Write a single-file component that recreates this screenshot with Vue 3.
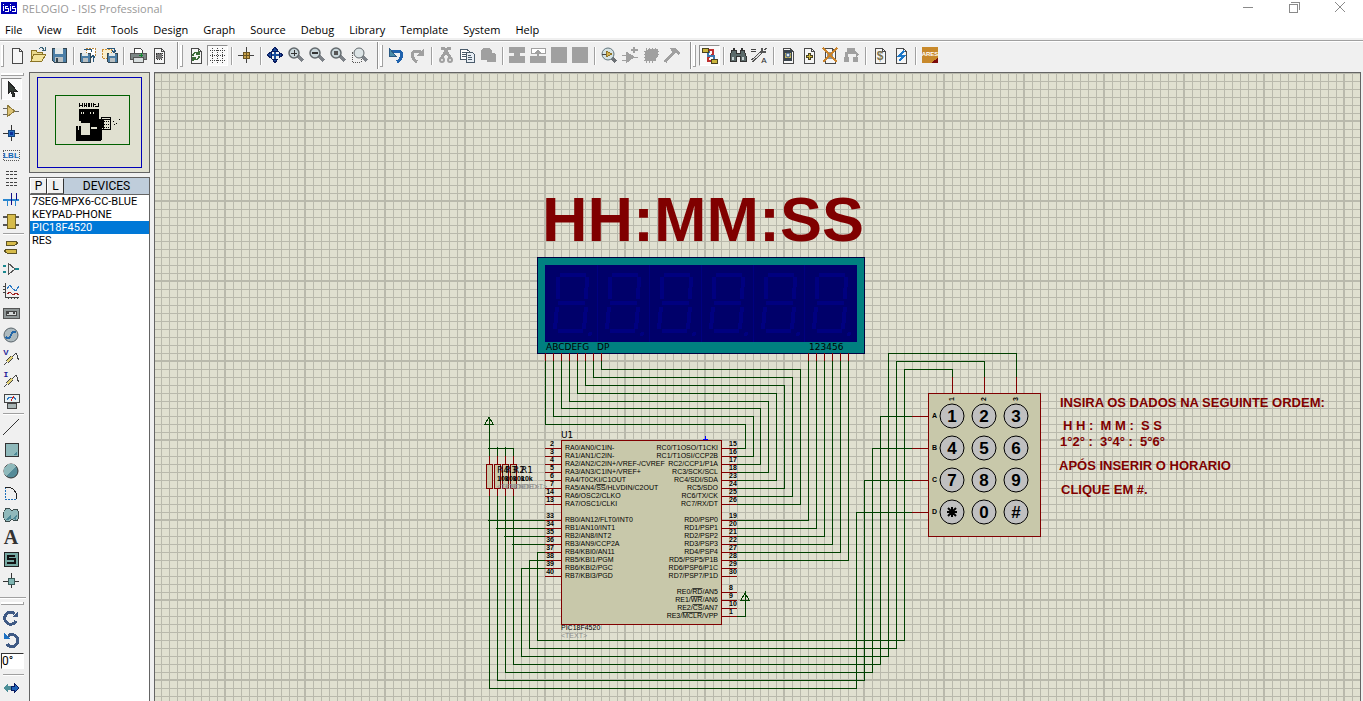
<script setup>
import { ref } from 'vue'

const menus = ['File', 'View', 'Edit', 'Tools', 'Design', 'Graph', 'Source', 'Debug', 'Library', 'Template', 'System', 'Help']

const page = '<path d="M3 1h7l3 3v12H3z" fill="#f6f6f6" stroke="#4a4a4a"/><path d="M10 1v3h3" fill="none" stroke="#4a4a4a"/>'
const lens = '<path d="M10 9l5 5" stroke="#7d8288" stroke-width="3"/><circle cx="6" cy="6" r="5" fill="#c9d6da" stroke="#62696d" stroke-width="1.5"/>'
const disk = '<path d="M1 1h14v14H3l-2-2z" fill="#4b7ea6" stroke="#33454f"/><path d="M4 1h8v6H4z" fill="#e2e8e8"/><path d="M4 10h8v5H4z" fill="#b8bfc2"/><path d="M5 11h2v4H5z" fill="#33454f"/>'
const smallDisk = '<path d="M0 6h10v9H1l-1-1z" fill="#4b7ea6" stroke="#33454f"/><path d="M2 6h6v3H2z" fill="#e2e8e8"/><path d="M3 11h5v4H3z" fill="#b8bfc2"/>'
const probe = '<path d="M1 16l3-3" stroke="#444"/><path d="M4 13l5-5" stroke="#444" stroke-width="4"/><path d="M4 13l5-5" stroke="#e0cf73" stroke-width="2"/><path d="M9 8l2-2c1-2 3-2 3 0v2l2 3" fill="none" stroke="#444"/>'
const glyph = (t, x, y, size, fill, family = 'Liberation Sans', weight = 400) =>
  `<text x="${x}" y="${y}" text-anchor="middle" font-family="${family}" font-size="${size}" font-weight="${weight}" fill="${fill}">${t}</text>`

const icons = {
  new: page,
  open: '<path d="M1 14V3h5l1 2h5v3" fill="#e9d98c" stroke="#8b7426"/><path d="M1 14l3-7h12l-4 7z" fill="#f2e39b" stroke="#8b7426"/><path d="M9 2c2-2 4-2 5 1M12 3h3V0" fill="none" stroke="#3b6579"/>',
  save: disk,
  import: '<path d="M6 1h9v9H6z" fill="#fff" stroke="#b98436" stroke-dasharray="2 1"/>' + smallDisk + '<path d="M13 15V9M11 11l2-3 2 3" fill="none" stroke="#29577a"/><path d="M4 2h7v3" fill="none" stroke="#29577a"/>',
  export: '<path d="M1 2h9v9H1z" fill="#fbeecb" stroke="#c98e34" stroke-dasharray="2 1"/><g transform="translate(6 0)">' + smallDisk + '</g><path d="M6 1h7v4M11 3l2 3 2-3" fill="none" stroke="#29577a"/>',
  print: '<path d="M4 1h6l2 2v4H4z" fill="#fff" stroke="#444"/><path d="M0 6h16v6H0z" fill="#7c8685" stroke="#555"/><path d="M3 10h10v5H3z" fill="#d9dfdf" stroke="#555"/><path d="M9 8h4M11 6v4" stroke="#0b8a2a"/>',
  area: page + '<path d="M5 6h6v6H5z" fill="#777" stroke="#333" stroke-dasharray="1 1"/>',
  redraw: page + '<path d="M5 9c0-4 4-4 5-2M8 7h3V4M11 9c0 4-4 4-5 2M8 11H5v3" fill="none" stroke="#3e6d39" stroke-width="1.5"/>',
  grid: '<path d="M1 3h15M1 8h15M1 13h15M3 1v15M8 1v15M13 1v15" stroke="#444" stroke-dasharray="1 1" fill="none"/>',
  origin: '<path d="M8 0v16M0 8h16" stroke="#444"/><path d="M5 5h6v6H5z" fill="#c8a24a" stroke="#6b5523"/><path d="M8 5v6M5 8h6" stroke="#6b5523"/>',
  pan: '<path d="M8 1v14M1 8h14" stroke="#1d4f9e" stroke-width="2"/><path d="M8 0l3 4H5zM8 16l3-4H5zM0 8l4-3v6zM16 8l-4-3v6z" fill="#1d4f9e" stroke="#0a1c60"/>',
  zoomIn: lens + '<path d="M3 6h6M6 3v6" stroke="#333"/>',
  zoomOut: lens + '<path d="M3 6h6" stroke="#333" stroke-width="2"/>',
  zoomAll: lens + '<path d="M4 4h4v4H4z" fill="#555"/>',
  zoomArea: '<path d="M1 5h9v10H1z" fill="none" stroke="#555" stroke-dasharray="1 1"/><g transform="translate(2 0)"><path d="M9 9l5 5" stroke="#7d8288" stroke-width="3"/><circle cx="6" cy="6" r="5" fill="#dce4e6" stroke="#62696d"/></g>',
  undo: '<path d="M4 4h5c6 0 6 7 0 11" fill="none" stroke="#1f62ad" stroke-width="3"/><path d="M1 1v8h7z" fill="#4a8ca8" stroke="#2a5a86"/>',
  redo: '<path d="M12 4H8c-6 0-6 7 0 11" fill="none" stroke="#a0a0a0" stroke-width="3"/><path d="M15 1v8H8z" fill="#a0a0a0"/>',
  cut: '<path d="M3 1l3 0 7 11M13 1h-3L3 12" fill="none" stroke="#a0a0a0" stroke-width="3"/><circle cx="4" cy="13" r="2" fill="none" stroke="#a0a0a0" stroke-width="2"/><circle cx="12" cy="13" r="2" fill="none" stroke="#a0a0a0" stroke-width="2"/>',
  copy: '<path d="M1 2h6l3 2v8H1z" fill="#fff" stroke="#4b5c6c"/><path d="M3 5h4M3 7h4M3 9h4" stroke="#4b5c6c"/><path d="M7 5h6l2 2v8H7z" fill="#e8eef4" stroke="#4b5c6c"/><path d="M9 8h3M9 10h4M9 12h4" stroke="#4b5c6c"/>',
  paste: '<path d="M1 3l3-2h5l3 2v3h2l2 2v7H7v-2H1z" fill="#a0a0a0"/>',
  blockCopy: '<path d="M0 0h16v6h-5v3h5v7H0V9h5V6H0z" fill="#a0a0a0"/>',
  blockMove: '<path d="M1 1h14v5H1z" fill="#fff" stroke="#a0a0a0"/><path d="M8 2l3 4H9v3h7v7H0V9h7V6H5z" fill="#a0a0a0"/>',
  block: '<path d="M0 0h16v16H0z" fill="#a0a0a0"/>',
  pick: '<path d="M11 11l4 4" stroke="#6d7175" stroke-width="3"/><circle cx="7" cy="7" r="6" fill="#d5e2e4" stroke="#62757d"/><path d="M5 4l6 3-6 3z" fill="#d6b453" stroke="#8f7326"/><path d="M1 7h4" stroke="#444"/>',
  make: '<path d="M4 5l8 5-8 6zM0 8h4M0 13h4M12 10h4" fill="#a0a0a0" stroke="#a0a0a0"/><path d="M12 0v6M9 3h7" stroke="#a0a0a0" stroke-width="2"/>',
  pack: '<path d="M5 2h10v7l-4 5H2V5z" fill="#a0a0a0"/><path d="M3 1v15M6 1v15M9 1v15M12 1v13M1 4h15M1 7h15M1 10h13M1 13h12" stroke="#a0a0a0"/>',
  hammer: '<path d="M1 15L10 5" stroke="#a0a0a0" stroke-width="3"/><path d="M6 1h5l5 5-1 2-3-2-3 1z" fill="#a0a0a0"/>',
  wires: '<path d="M8 3h4v4l-5 4v3h3" fill="none" stroke="#c03030" stroke-width="2"/><path d="M9 5h-2v4h6v3" fill="none" stroke="#3c78b0" stroke-width="2"/><path d="M1 1h6v4H1zM10 12h6v4h-6z" fill="#cbb53c" stroke="#4b4320"/>',
  find: '<path d="M2 3h4v3h4V3h4l2 6v5h-6V9H6v5H0V9z" fill="#5b6a6a" stroke="#333"/><path d="M2 10h2v3H2zM12 10h2v3h-2z" fill="#c8d2d2"/><path d="M3 1h2v3H3zM11 1h2v3h-2z" fill="#333"/>',
  props: '<path d="M0 2h5M0 4h5" stroke="#444"/><path d="M1 14L12 4" stroke="#555" stroke-width="3"/><path d="M1 14L12 4" stroke="#ddd"/><path d="M11 1v4h4M15 1l-1 2" fill="none" stroke="#555" stroke-width="2"/>' + glyph('A', 13, 16, 8, '#222'),
  explorer: page + '<path d="M4 3h8v11H4z" fill="#39434c"/><path d="M5 6h6v5H5z" fill="#cbb95a"/><circle cx="8" cy="8" r="2" fill="#e4ecf4" stroke="#355a8a"/>',
  newSheet: page + '<path d="M8 6v7M5 9h7" stroke="#4b4320" stroke-width="3"/><path d="M8 7v5M6 9h5" stroke="#cbb53c"/>',
  removeSheet: page + '<path d="M5 5h6v7H5z" fill="#8a939b"/><path d="M1 1l14 14M15 1L1 15" stroke="#c9832b" stroke-width="2"/>',
  exitSheet: '<path d="M4 1h8v6H4zM1 10h5v5H1zM10 10h5v5h-5zM2 5h3v5H2zM12 4l4 3-3 3z" fill="#a0a0a0"/>',
  bill: page + glyph('$', 8, 13, 12, '#7a7250', 'Liberation Sans', 700),
  erc: page + '<path d="M11 4L6 9h5l-5 5" fill="none" stroke="#1d78c8" stroke-width="2"/>',
  ares: '<path d="M0 0h16v16H0z" fill="#c8892b"/><path d="M9 16h7v-5z" fill="#7c0a0a"/>' + glyph('ARES', 8, 9, 6, '#fff', 'Liberation Sans', 700),
  select: '<path d="M5 0v13l3-3 2 6 2-1-2-5h4z" fill="#333b35" stroke="#222"/>',
  component: '<path d="M0 5h4M0 11h4M12 8h4" stroke="#666"/><path d="M4 2l8 6-8 6z" fill="#dcc274" stroke="#8f7c3c"/>',
  junction: '<path d="M8 0v16M0 8h16" stroke="#333"/><path d="M5 5h6v6H5z" fill="#2a6fc0" stroke="#17457c"/><path d="M7 7h3v3H7z" fill="#0b2e9a"/>',
  label: '<path d="M0 3h16v10H0z" fill="none" stroke="#555" stroke-dasharray="1 1"/>' + glyph('LBL', 8, 11, 8, '#1064b4', 'Liberation Sans', 700),
  script: '<path d="M3 2h11M3 5h11M3 9h11M3 13h11M3 16h11" stroke="#444" stroke-dasharray="3 1"/>',
  bus: '<path d="M0 9h16" stroke="#2a86cf" stroke-width="2"/><path d="M4 15V9M12 15V9" stroke="#2a86cf"/><path d="M8 2v12M13 2v7" stroke="#10108a"/>',
  sub: '<path d="M0 4h16M0 12h16" stroke="#555" stroke-width="2"/><path d="M4 1h8v14H4z" fill="#d6bb4a" stroke="#756423"/>',
  terminal: '<path d="M3 2h9l3 2-3 2H3zM13 10H4l-3 2 3 2h9z" fill="#d6bb4a" stroke="#5d5328"/>',
  pin: '<path d="M0 5h3M0 11h3M12 8h4" stroke="#1a8890" stroke-width="2"/><path d="M5 14V2l7 6-7 6" fill="none" stroke="#555"/>',
  graph: '<path d="M2 0v14h14M0 3h2M0 6h2M0 9h2M5 14v2M8 14v2M11 14v2M14 14v2" fill="none" stroke="#444"/><path d="M4 6l3-4 3 4 3 2 3-5" fill="none" stroke="#2a78c4"/><path d="M4 11l3-2 3 3 3-2 3 2" fill="none" stroke="#a02020"/>',
  tape: '<path d="M0 3h16v10H0z" fill="#909797" stroke="#555"/><path d="M3 6h10v4H3z" fill="#d4d8d8" stroke="#444"/><path d="M4 7h2v2H4zM10 7h2v2h-2z" fill="#444"/>',
  generator: '<circle cx="8" cy="8" r="7" fill="#aebabe" stroke="#59646a"/><path d="M3 10c2 2 4 1 5-2s3-4 5-2" fill="none" stroke="#2467a8" stroke-width="2"/>',
  vprobe: glyph('V', 3, 6, 8, '#1a1a96', 'Liberation Sans', 700) + probe,
  iprobe: glyph('I', 3, 6, 8, '#1a1a96', 'Liberation Mono', 700) + probe,
  meter: '<path d="M1 1h15v8H1z" fill="#e8f0f2" stroke="#444"/><path d="M4 7c2-4 7-4 9 0" fill="none" stroke="#2a78c4"/><path d="M8 8l3-5" stroke="#c02020"/><path d="M4 10h9v5H4z" fill="#a8b4b4" stroke="#444"/>',
  line: '<path d="M0 16L16 0" stroke="#333"/>',
  box: '<path d="M2 2h13v13H2z" fill="#8fb9bb" stroke="#333"/><path d="M14 10v4h-4z" fill="#4b8795"/>',
  circle: '<circle cx="8" cy="8" r="7" fill="#558b98" stroke="#333"/><path d="M3 13A7 7 0 0113 3z" fill="#8fb9bb"/>',
  arc: '<path d="M2 2v12h12" fill="none" stroke="#1d6fb8" stroke-dasharray="2 1"/><path d="M2 2c8 0 12 4 12 12" fill="none" stroke="#222"/>',
  path: '<path d="M5 1c3 0 3 3 4 3s1-2 3-2c5 0 5 12 0 12-2 0-2-2-3-2s-1 3-4 3c-6 0-6-14 0-14z" fill="#8fb9bb" stroke="#3a4a4a"/><path d="M3 13l5-6v5zM10 12l4-5-1 6z" fill="#4b8795"/>',
  text: glyph('A', 8, 15, 20, '#333', 'Liberation Serif', 700),
  symbol: '<path d="M1 1h14v14H1z" fill="#76a8a2" stroke="#222"/><path d="M12 5H5v3h7v4H4" fill="none" stroke="#111" stroke-width="2"/>',
  marker: '<path d="M8 0v15M0 8h16" stroke="#333"/><path d="M5 5h6v6H5z" fill="#7fb5b2" stroke="#3a5a58"/>',
  cw: '<path d="M13 11a6 6 0 11-1-7" fill="none" stroke="#3f5a85" stroke-width="3"/><path d="M15 1v6H9z" fill="#3f5a85"/>',
  ccw: '<path d="M5 4a6 6 0 11-1 8" fill="none" stroke="#3f5a85" stroke-width="3"/><path d="M1 1v6h7z" fill="#1e72c4"/>',
  flip: '<path d="M0 8l5-5v3h3v4H5v3z" fill="#4d8f98"/><path d="M16 8l-5-5v3H8v4h3v3z" fill="#1e62b8" stroke="#0a1c60"/>',
}

const toolGroups = [
  [['new', 'open', 'save'], ['import', 'export'], ['print', 'area']],
  [['redraw', 'grid'], ['origin'], ['pan', 'zoomIn', 'zoomOut', 'zoomAll', 'zoomArea']],
  [['undo', 'redo'], ['cut', 'copy', 'paste'], ['blockCopy', 'blockMove', 'block', 'block'], ['pick', 'make', 'pack', 'hammer']],
  [['wires'], ['find', 'props'], ['explorer', 'newSheet', 'removeSheet', 'exitSheet'], ['bill', 'erc'], ['ares']],
]
const pressed = new Set(['grid', 'wires', 'select'])

const modeGroups = [
  ['select', 'component', 'junction', 'label', 'script', 'bus', 'sub'],
  ['terminal', 'pin', 'graph', 'tape', 'generator', 'vprobe', 'iprobe', 'meter'],
  ['line', 'box', 'circle', 'arc', 'path', 'text', 'symbol', 'marker'],
]

const devices = ['7SEG-MPX6-CC-BLUE', 'KEYPAD-PHONE', 'PIC18F4520', 'RES']
const selected = ref('PIC18F4520')
const angle = ref('0°')

const gridX = Array.from({ length: 320 }, (_, i) => {
  const x = 152 + i * 8
  return { at: x < 760 ? x + 1 : x, major: x % 80 === 64 }
})
const gridY = Array.from({ length: 200 }, (_, i) => {
  const y = 72 + i * 8
  return { at: y < 408 ? y + 1 : y, major: y % 80 === 40 }
})

const segOut = [
  [545, 424, 745, 448], [553, 416, 753, 456], [561, 408, 760, 464], [569, 401, 768, 472],
  [577, 393, 776, 480], [585, 385, 784, 488], [593, 377, 792, 496], [601, 369, 800, 504],
]
const digitOut = [[808, 520], [816, 528], [824, 536], [832, 544], [840, 552], [848, 560]]
const wires = [
  ...segOut.map(([x, y, x2, y2]) => `M${x} 361V${y}H${x2}V${y2}H737`),
  ...digitOut.map(([x, y]) => `M${x} 361V${y}H737`),
  'M952 377V369H904V640H537V552H545',
  'M984 377V361H896V648H529V560H545',
  'M1016 377V353H888V656H521V568H545',
  'M912 416H880V664H513V496',
  'M912 448H872V672H505V496',
  'M912 480H864V680H497V496',
  'M912 512H856V688H489V496',
  'M488 520H545', 'M496 528H545', 'M504 536H545', 'M512 544H545',
  'M489 417V456', 'M488 448H513V456', 'M497 447V456', 'M505 447V456',
  'M489 417L485 424H493Z',
  'M737 616H745V593L741 600H749L745 593',
]

const leftPins = [
  ['2', 448, ['RA0/AN0/C1IN-']], ['3', 456, ['RA1/AN1/C2IN-']], ['4', 464, ['RA2/AN2/C2IN+/VREF-/CVREF']],
  ['5', 472, ['RA3/AN3/C1IN+/VREF+']], ['6', 480, ['RA4/T0CKI/C1OUT']], ['7', 488, ['RA5/AN4/', 'SS', '/HLVDIN/C2OUT']],
  ['14', 496, ['RA6/OSC2/CLKO']], ['13', 504, ['RA7/OSC1/CLKI']],
  ['33', 520, ['RB0/AN12/FLT0/INT0']], ['34', 528, ['RB1/AN10/INT1']], ['35', 536, ['RB2/AN8/INT2']],
  ['36', 544, ['RB3/AN9/CCP2A']], ['37', 552, ['RB4/KBI0/AN11']], ['38', 560, ['RB5/KBI1/PGM']],
  ['39', 568, ['RB6/KBI2/PGC']], ['40', 576, ['RB7/KBI3/PGD']],
]
const rightPins = [
  ['15', 448, ['RC0/T1OSO/T1CKI']], ['16', 456, ['RC1/T1OSI/CCP2B']], ['17', 464, ['RC2/CCP1/P1A']],
  ['18', 472, ['RC3/SCK/SCL']], ['23', 480, ['RC4/SDI/SDA']], ['24', 488, ['RC5/SDO']],
  ['25', 496, ['RC6/TX/CK']], ['26', 504, ['RC7/RX/DT']],
  ['19', 520, ['RD0/PSP0']], ['20', 528, ['RD1/PSP1']], ['21', 536, ['RD2/PSP2']], ['22', 544, ['RD3/PSP3']],
  ['27', 552, ['RD4/PSP4']], ['28', 560, ['RD5/PSP5/P1B']], ['29', 568, ['RD6/PSP6/P1C']], ['30', 576, ['RD7/PSP7/P1D']],
  ['8', 592, ['RE0/', 'RD', '/AN5']], ['9', 600, ['RE1/', 'WR', '/AN6']], ['10', 608, ['RE2/', 'CS', '/AN7']],
  ['1', 616, ['RE3/', 'MCLR', '/VPP']],
]
const resistors = [['R4', 489], ['R3', 497], ['R2', 505], ['R1', 513]]

const cells = [545, 597, 649, 701, 753, 804]
const keys = ['123', '456', '789', '*0#'].flatMap((row, r) =>
  [...row].map((label, c) => ({ label, x: 952 + c * 32, y: 416 + r * 32 })))
const notes = [
  [1060, 407, 'INSIRA OS DADOS NA SEGUINTE ORDEM:'],
  [1063, 430, 'H H :  M M :  S S'],
  [1060, 446, '1°2° :  3°4° :  5°6°'],
  [1059, 470, 'APÓS INSERIR O HORARIO'],
  [1061, 494, 'CLIQUE EM #.'],
]
</script>

<template>
  <div class="window">
    <header class="titlebar">
      <svg class="logo" width="16" height="12" viewBox="0 0 16 12" aria-hidden="true">
        <path d="M0 0h16v12H0z" fill="#0000b4" />
        <path d="M2 4v5M2 2v1M7 4H4v2h3v3H4M9 4v5M9 2v1M14 4h-3v2h3v3h-3" fill="none" stroke="#fff" />
      </svg>
      <h1>RELOGIO - ISIS Professional</h1>
      <div class="controls">
        <button aria-label="Minimize"><svg width="12" height="12"><path d="M1 6h10" /></svg></button>
        <button aria-label="Restore"><svg width="12" height="12"><path d="M1 3h8v8H1zM3 1h8v8" /></svg></button>
        <button aria-label="Close"><svg class="smooth" width="12" height="12"><path d="M1 1l10 10M11 1L1 11" /></svg></button>
      </div>
    </header>

    <nav class="menubar">
      <button v-for="m in menus" :key="m">{{ m }}</button>
    </nav>

    <div class="toolbar">
      <div v-for="(group, g) in toolGroups" :key="g" class="group">
        <i class="grip"></i>
        <template v-for="(set, s) in group" :key="s">
          <i v-if="s" class="sep"></i>
          <button v-for="(name, n) in set" :key="n" :class="['tool', { pressed: pressed.has(name) }]" :aria-label="name">
            <svg width="17" height="17" v-html="icons[name]"></svg>
          </button>
        </template>
        <i v-if="g < 3" class="end"></i>
      </div>
    </div>

    <div class="body">
      <aside class="modes">
        <i class="hgrip"></i>
        <template v-for="(group, g) in modeGroups" :key="g">
          <i v-if="g" class="hsep"></i>
          <button v-for="name in group" :key="name" :class="['mode', { pressed: pressed.has(name) }]" :aria-label="name">
            <svg width="17" height="17" v-html="icons[name]"></svg>
          </button>
        </template>
        <i class="hend"></i>
        <i class="hgrip"></i>
        <button class="mode" aria-label="Rotate clockwise"><svg width="17" height="17" v-html="icons.cw"></svg></button>
        <button class="mode" aria-label="Rotate anti-clockwise"><svg width="17" height="17" v-html="icons.ccw"></svg></button>
        <input v-model="angle" class="angle" aria-label="Rotation angle" />
        <i class="hsep wide"></i>
        <button class="mode" aria-label="Mirror"><svg width="17" height="17" v-html="icons.flip"></svg></button>
      </aside>

      <section class="side">
        <div class="overview">
          <svg width="119" height="99" viewBox="30 73 119 99" aria-label="Overview">
            <rect x="37" y="77" width="104" height="90" fill="none" stroke="#0000b8" />
            <rect x="55" y="95" width="74" height="49" fill="none" stroke="#006000" />
            <path d="M79 109h20v12h-20zM76 126h5v-6h-2v-4h20v3h4v9h-1v11l-2 2H76z" />
            <path d="M81 123h9v12h-9zM91 127h6v2h-6zM78 122h1v8h-1z" fill="#e0e0d0" />
            <path d="M81 112h1v2h-1zM83 112h1v2h-1zM90 112h1v2h-1zM93 112h1v2h-1z" fill="#e0e0d0" />
            <path d="M101 117h9v12h-9z" fill="none" stroke="#000" />
            <path d="M103 119h7v10h-7z" fill="#e0e0d0" stroke="#000" />
            <path d="M104 121h5M104 124h5M104 127h5" stroke="#000" stroke-dasharray="1 1" />
            <path d="M113 121h1v1h-1zM114 124h1v1h-1zM116 123h1v1h-1zM119 119h1v1h-1z" />
            <path d="M79 103v4M80 105h2M82 103v4M84 103v4M85 105h2M86 103v4M88 103v4M89 103v4M91 103v4M93 103v4M94 104h2M95 106h3M98 103v4" stroke="#000" />
          </svg>
        </div>
        <div class="devices">
          <div class="devhead">
            <button>P</button>
            <button>L</button>
            <h2>DEVICES</h2>
          </div>
          <ul>
            <li v-for="d in devices" :key="d">
              <button :class="{ selected: d === selected }" @click="selected = d">{{ d }}</button>
            </li>
          </ul>
        </div>
      </section>

      <main class="sheet">
        <svg class="canvas">
          <g transform="translate(-155 -73)">
            <g fill="#b9b9ac">
              <rect v-for="l in gridX" :key="'x' + l.at" :x="l.major ? l.at - 1 : l.at" y="73" :width="l.major ? 2 : 1" height="1600" />
              <rect v-for="l in gridY" :key="'y' + l.at" x="155" :y="l.major ? l.at - 1 : l.at" width="2560" :height="l.major ? 2 : 1" />
            </g>

            <text x="542" y="241" class="clock">HH:MM:SS</text>

            <g class="lines">
              <rect x="537" y="257" width="327" height="96" fill="#008080" stroke="#000040" />
              <rect x="545" y="265" width="312" height="77" fill="#00006a" />
              <g v-for="(x, i) in cells" :key="x" :transform="`translate(${x} 265)`">
                <path v-if="i" d="M0 0V77" stroke="#000080" />
                <path class="segs" d="M15 10h26M13 12v22M42 12l-1 22M13 38h27M12 42l-2 22M41 42l-2 22M13 66h25" />
                <circle cx="45" cy="69" r="2" fill="#000080" />
              </g>
            </g>
            <g class="label">
              <text x="546" y="350">ABCDEFG</text>
              <text x="597" y="350">DP</text>
              <text x="809" y="350">123456</text>
              <text x="561" y="438">U1</text>
            </g>

            <g class="lines" fill="none">
              <path v-for="w in wires" :key="w" :d="w" stroke="#004000" />
              <path v-for="s in segOut" :key="s[0]" :d="`M${s[0]} 353v8`" stroke="#800000" />
              <path v-for="s in digitOut" :key="s[0]" :d="`M${s[0]} 353v8`" stroke="#800000" />
            </g>

            <g v-for="[name, x] in resistors" :key="name">
              <g class="lines" fill="none" stroke="#800000">
                <rect :x="x - 3" y="464" width="6" height="24" fill="#c8c8aa" />
                <path :d="`M${x} 456v8M${x} 488v8`" />
              </g>
            </g>
            <g v-for="[name, x] in resistors" :key="name">
              <text :x="x + 8" y="473" class="label">{{ name }}</text>
              <text :x="x + 8" y="481" class="pin num">10k</text>
              <text :x="x + 8" y="489" class="pin dim">&lt;TEXT&gt;</text>
            </g>

            <g class="lines" stroke="#800000">
              <rect x="561" y="440" width="160" height="184" fill="#c8c8aa" />
              <path v-for="p in leftPins" :key="p[0]" :d="`M545 ${p[1]}h16`" />
              <path v-for="p in rightPins" :key="p[0]" :d="`M721 ${p[1]}h16`" />
            </g>
            <path class="lines" d="M703 439h5M705 436v4" fill="none" stroke="#0000ff" />
            <g class="pin">
              <template v-for="[num, y, parts] in leftPins" :key="num">
                <text x="554" :y="y - 2" class="num" text-anchor="end">{{ num }}</text>
                <text x="565" :y="y + 2"><tspan v-for="(t, i) in parts" :key="i" :class="{ over: i === 1 }">{{ t }}</tspan></text>
              </template>
              <template v-for="[num, y, parts] in rightPins" :key="num">
                <text x="729" :y="y - 2" class="num">{{ num }}</text>
                <text x="718" :y="y + 2" text-anchor="end"><tspan v-for="(t, i) in parts" :key="i" :class="{ over: i === 1 }">{{ t }}</tspan></text>
              </template>
              <text x="561" y="630">PIC18F4520</text>
              <text x="561" y="638" class="dim">&lt;TEXT&gt;</text>
            </g>

            <g class="lines" stroke="#800000">
              <rect x="928" y="393" width="112" height="143" fill="#c8c8aa" />
              <path d="M952 377v16M984 377v16M1016 377v16M912 416h16M912 448h16M912 480h16M912 512h16" />
            </g>
            <g class="keypad">
              <g v-for="k in keys" :key="k.label">
                <circle :cx="k.x" :cy="k.y" r="12" fill="#c0c0c0" stroke="#000" />
                <path v-if="k.label === '*'" :d="`M${k.x} ${k.y - 5}v10M${k.x - 5} ${k.y}h10M${k.x - 4} ${k.y - 4}l8 8M${k.x + 4} ${k.y - 4}l-8 8`" stroke="#000" stroke-width="2" />
                <text v-else :x="k.x" :y="k.y + 6" text-anchor="middle">{{ k.label }}</text>
              </g>
            </g>
            <g class="pin">
              <text v-for="(t, i) in 'ABCD'" :key="t" x="932" :y="418 + i * 32" class="num">{{ t }}</text>
              <text v-for="(t, i) in '123'" :key="t" :transform="`translate(${954 + i * 32} 401) rotate(-90)`" class="num">{{ t }}</text>
            </g>

            <text v-for="[x, y, t] in notes" :key="y" :x="x" :y="y" class="note">{{ t }}</text>
          </g>
        </svg>
      </main>
    </div>
  </div>
</template>

<style>
html, body { margin: 0; overflow: hidden; }
</style>

<style scoped>
* { box-sizing: border-box; }
button { padding: 0; border: 0; background: none; font: inherit; color: inherit; }
i { display: block; flex: none; }
.window { display: flex; flex-direction: column; height: 100vh; background: #f0f0f0; font-family: "Open Sans", "Noto Sans", sans-serif; font-size: 11px; color: #000; }
.titlebar { display: flex; align-items: center; height: 20px; flex: none; padding-bottom: 2px; background: #fff; }
.logo { margin: 0 5px 3px 1px; shape-rendering: crispEdges; }
h1 { margin: 0; flex: 1; font-size: 11px; font-weight: 400; line-height: 18px; color: #999; }
.controls { display: flex; gap: 34px; padding: 0 17px 4px 0; }
.controls button { width: 12px; height: 12px; }
.controls svg { display: block; fill: none; stroke: #8a8a8a; shape-rendering: crispEdges; }
.controls .smooth { shape-rendering: auto; }
.menubar { display: flex; gap: 15px; flex: none; height: 18px; padding: 1px 0 0 5px; background: #fff; line-height: 17px; }
.toolbar { display: flex; flex: none; height: 34px; border-top: 2px solid #f0f0f0; box-shadow: inset 0 1px #a0a0a0, inset 0 2px #fff; }
.group { display: flex; align-items: center; padding-bottom: 1px; }
.grip { width: 3px; height: 22px; margin: 0 3px 0 1px; border: solid #a0a0a0; border-width: 0 1px 1px 0; background: #fff; }
.sep { width: 2px; height: 18px; margin: 0 3px; border-left: 1px solid #a0a0a0; background: #fff; }
.end { width: 2px; height: 27px; margin-left: 7px; border-left: 1px solid #909090; background: #fff; }
.tool { display: flex; align-items: center; justify-content: center; width: 21px; height: 21px; flex: none; }
.tool svg, .mode svg { display: block; flex: none; overflow: visible; shape-rendering: crispEdges; }
.tool :deep(circle), .mode :deep(circle) { shape-rendering: geometricPrecision; }
.pressed { background: #fafafa; border: 1px solid; border-color: #909090 #fff #fff #909090; }
.body { display: flex; flex: 1; min-height: 0; }
.modes { display: flex; flex-direction: column; width: 27px; flex: none; overflow: hidden; }
.hgrip { width: 23px; height: 3px; margin: 1px 0 2px 1px; border: solid #a0a0a0; border-width: 0 1px 1px 0; background: #fff; }
.mode { display: flex; align-items: center; justify-content: center; width: 21px; height: 22px; margin-left: 1px; flex: none; }
.hsep { width: 21px; height: 2px; margin: 1px 0 1px 3px; border-top: 1px solid #a0a0a0; background: #fff; }
.hsep.wide { margin-top: 5px; }
.hend { width: 26px; height: 2px; margin: 5px 0 2px; border-top: 1px solid #a0a0a0; background: #fff; }
.angle { width: 23px; height: 16px; margin: 2px 0 0 1px; padding: 0; border: 1px solid; border-color: #333 #fff #fff #333; border-radius: 0; flex: none; background: #fff; font: 12px Roboto, sans-serif; outline: 0; }
.side { display: flex; flex-direction: column; gap: 4px; width: 121px; margin-left: 2px; flex: none; }
.overview { border: 1px solid #646464; background: #e0e0d0; }
.overview svg { display: block; shape-rendering: crispEdges; }
.devices { flex: 1; border: 1px solid #646464; border-bottom: 0; background: #fff; font-family: Roboto, sans-serif; font-size: 11px; }
.devhead { display: flex; height: 17px; border-bottom: 1px solid #646464; background: #bfcddb; font-size: 12px; }
.devhead button { width: 17px; height: 16px; border: 1px solid; border-color: #fff #333 #646464 #fff; background: #f0f0f0; line-height: 14px; }
h2 { flex: 1; margin: 0; font-size: 12px; font-weight: 400; line-height: 16px; text-align: center; }
ul { margin: 0; padding: 0; list-style: none; }
li button { display: block; width: 100%; padding-left: 2px; line-height: 13px; text-align: left; }
.selected { background: #0078d7; color: #fff; }
.sheet { flex: 1; min-width: 0; margin: 0 2px 0 4px; border: 1px solid #646464; border-bottom: 0; background: #e0e0d0; }
.canvas { display: block; width: 100%; height: 100%; }
.lines { shape-rendering: crispEdges; }
.segs { fill: none; stroke: #000080; stroke-width: 4; }
text { font-family: "Liberation Sans", Arial, sans-serif; white-space: pre; }
.clock { font-size: 63px; font-weight: 700; fill: #800000; }
.note { font-size: 13px; font-weight: 700; fill: #800000; }
.label text, text.label { font-family: "DejaVu Sans", sans-serif; font-size: 9px; }
.pin text, text.pin { font-size: 7px; }
.pin text.num, text.num { font-weight: 700; }
.pin text.dim, text.dim { fill: #8c8c8c; }
.over { text-decoration: overline; }
.keypad text { font-size: 17px; font-weight: 700; }
</style>
